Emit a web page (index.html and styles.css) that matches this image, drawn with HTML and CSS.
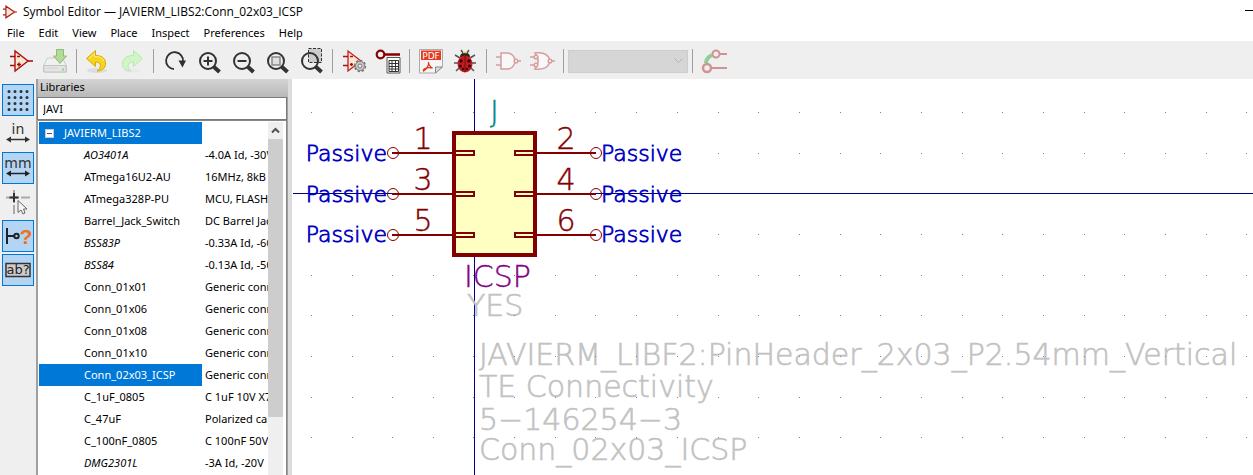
FILE: index.html
```html
<!DOCTYPE html>
<html lang="en">
<head>
<meta charset="utf-8">
<title>Symbol Editor</title>
<link rel="stylesheet" href="styles.css">
</head>
<body>
<header class="titlebar">
  <svg class="app-icon" width="14" height="14" viewBox="0 0 24 24"><path d="M5 2v20L20 12zM0 7h5M0 17h5M20 12h4" fill="#f9e8d4" stroke="#b01818" stroke-width="2"/></svg>
  <h1 class="title">Symbol Editor — JAVIERM_LIBS2:Conn_02x03_ICSP</h1>
  <button class="minimize" aria-label="Minimize"></button>
</header>
<nav class="menubar">
  <button>File</button><button>Edit</button><button>View</button><button>Place</button><button>Inspect</button><button>Preferences</button><button>Help</button>
</nav>
<div class="toolbar">
  <button aria-label="New symbol"><svg viewBox="0 0 24 24"><path d="M6 2v20L19 12z" fill="#fae6cf" stroke="#b01010" stroke-width="1.4"/><path d="M1 7.500h5M1 16.500h5M19 12h5M8 7.500h3M8 15.500h4M10 13.500v4" fill="none" stroke="#a80808" stroke-width="1.500"/></svg></button>
  <button aria-label="Save"><svg viewBox="0 0 24 24"><path d="M4.500 9h15l4 8v6H.5v-6z" fill="#f1f1f1" stroke="#ccc"/><path d="M1 16.500h22V23H1z" fill="#e4e4e4" stroke="#c4c4c4"/><path d="M3 19h12" stroke="#d2d2d2"/><path d="M19 20.500h2" stroke="#7fe07f" stroke-width="2"/><path d="M13.500.5h7V7h3L17 14.500 10.500 7h3z" fill="#b3da96" stroke="#8fbb7d"/></svg></button>
  <i class="sep"></i>
  <button aria-label="Undo"><svg viewBox="0 0 24 24"><ellipse cx="11" cy="21.500" rx="10" ry="2.500" fill="#ddd"/><path d="M.5 9.500 9.500 1.500v5c7 0 10.500 3.500 10 9-.4 4-4 6.500-8.500 6.500 4-2.500 5.500-9-1.500-9v4.500z" fill="#f5d51e" stroke="#d9a900"/><path d="M3 9.500 8.500 4.500v3c5 0 8 1.500 9.500 4.500" fill="none" stroke="#fdf087"/></svg></button>
  <button aria-label="Redo"><svg viewBox="0 0 24 24"><ellipse cx="12" cy="21.500" rx="9" ry="2" fill="#e9e9e9"/><path d="M22.500 9.500 13.500 1.500v5c-7 0-11.500 3.500-11 9 .4 4 4 6.500 8.500 6.500-4-2.500-4.500-9 2.500-9v4.500z" fill="#d2f5c5" stroke="#b5e9aa"/></svg></button>
  <i class="sep"></i>
  <button aria-label="Refresh"><svg viewBox="0 0 24 24"><path d="M11 20.200a8.500 8.500 0 1 1 9-7.500" fill="none" stroke="#303030" stroke-width="1.800"/><path d="M15.500 11.500h7.500L19.500 18.500z" fill="#303030"/></svg></button>
  <button aria-label="Zoom in"><svg viewBox="0 0 24 24"><circle cx="11" cy="12" r="8" class="lens"/><path d="m16.500 17.500 6 5.500" class="grip"/><path d="M6.500 12h9M11 7.500v9" class="mark"/></svg></button>
  <button aria-label="Zoom out"><svg viewBox="0 0 24 24"><circle cx="11" cy="12" r="8" class="lens"/><path d="m16.500 17.500 6 5.500" class="grip"/><path d="M6.500 12h9" class="mark"/></svg></button>
  <button aria-label="Zoom to fit"><svg viewBox="0 0 24 24"><path d="M7 8h8v8H7z" fill="#e0e0e0" stroke="#888" stroke-width="1.500"/><circle cx="11" cy="12" r="8" class="lens"/><path d="m16.500 17.500 6 5.500" class="grip"/></svg></button>
  <button aria-label="Zoom to selection"><svg viewBox="0 0 24 24"><path d="M9.500-.5h13v14h-13z" fill="#ccc" stroke="#333" stroke-dasharray="3 1.500"/><circle cx="11" cy="12" r="8" class="lens"/><path d="m16.500 17.500 6 5.500" class="grip"/></svg></button>
  <i class="sep"></i>
  <button aria-label="Symbol properties"><svg viewBox="0 0 24 24"><path d="M6 2v20L19 12z" fill="#fae6cf" stroke="#c02020" stroke-width="1.300"/><path d="M1 7.500h5M1 16.500h5M8 7.500h3M8 15.500h3M9.500 14v3" stroke="#b01010" stroke-width="1.500"/><circle cx="18" cy="17" r="5.200" fill="#bbb" stroke="#777" stroke-width="2" stroke-dasharray="2.300 1.700"/><circle cx="18" cy="17" r="4.500" fill="#ccc" stroke="#888"/><circle cx="18" cy="17" r="2" fill="#eee" stroke="#777"/></svg></button>
  <button aria-label="Pin table"><svg viewBox="0 0 24 24"><circle cx="4.500" cy="5.500" r="3.800" fill="none" stroke="#870000" stroke-width="2.200"/><path d="M8 5.500h16" stroke="#870000" stroke-width="2.500"/><path d="M11 8.500h13V24H11z" fill="#fff" stroke="#555"/><path d="M13 11.500h9.500v11H13zM13 14.500h9M13 17.500h9M13 20h9M16 11.500v11M19.500 11.500v11" fill="none" stroke="#333"/></svg></button>
  <i class="sep"></i>
  <button aria-label="Datasheet"><svg viewBox="0 0 24 24"><path d="M.5.5h23V17l-7 7H.5z" fill="#f5f5f5" stroke="#aaa"/><path d="M2 1.500h20v9.500H2z" fill="#e63a20"/><text x="12" y="9.500" class="pdf">PDF</text><path d="M9.500 13c1 3-2 7-5 9-1-2 4-4 9-3-2-1-4-3-4-6z" fill="none" stroke="#e0371c" stroke-width="1.300"/><path d="M16.500 24v-6h7z" fill="#ddd" stroke="#888"/></svg></button>
  <button aria-label="Check symbol"><svg viewBox="0 0 24 24"><path d="M8 1l2 3M16 1l-2 3M2 6l5 3M22 6l-5 3M1 14h5M23 14h-5M3 22l4-4M21 22l-4-4" stroke="#555" stroke-width="1.500"/><path d="M7 8c0-6 10-6 10 0z" fill="#262626"/><path d="M10 3.500h4" stroke="#e7cf3c" stroke-width="1.500"/><ellipse cx="12" cy="15" rx="7.500" ry="8.500" fill="#c91920"/><path d="M12 7v16" stroke="#611" stroke-width="1"/><g fill="#230a0a"><circle cx="8" cy="12" r="1.700"/><circle cx="16" cy="12" r="1.700"/><circle cx="7.500" cy="17" r="1.500"/><circle cx="16.500" cy="17" r="1.500"/><circle cx="10" cy="20" r="1.200"/><circle cx="14" cy="20" r="1.200"/></g></svg></button>
  <i class="sep"></i>
  <button aria-label="Normal style"><svg viewBox="0 0 24 24" class="faded"><path d="M5 4h6a8 8 0 0 1 0 16H5z"/><circle cx="20" cy="12" r="1.800"/><path d="M0 8h5M0 16h5M22 12h3"/></svg></button>
  <button aria-label="De Morgan style"><svg viewBox="0 0 24 24" class="faded"><path d="M5 4c10-1 14 2 15 8-1 6-5 9-15 8 4-5 4-11 0-16z"/><circle cx="6" cy="8" r="1.800"/><circle cx="6" cy="16" r="1.800"/><path d="M0 8h4M0 16h4"/><circle cx="20" cy="12" r="1.800"/><path d="M22 12h3"/></svg></button>
  <i class="sep"></i>
  <select class="unit" aria-label="Unit" disabled><option></option></select>
  <i class="sep"></i>
  <button aria-label="Synchronized pins"><svg viewBox="0 0 24 24"><path d="M4 14c0-4 2-6 6-8" fill="none" stroke="#8fce95" stroke-width="4"/><path d="M17 5h8M9 19h16" stroke="#cf9393" stroke-width="2"/><circle cx="14" cy="5" r="3.500" fill="#efefef" stroke="#cf9393" stroke-width="2"/><circle cx="5" cy="19" r="4" fill="#efefef" stroke="#cf9393" stroke-width="2.500"/></svg></button>
</div>
<main class="workspace">
  <aside class="options">
    <button class="on" aria-label="Grid"><svg viewBox="0 0 24 24"><path d="M3 3.500h20M3 9.500h20M3 15.500h20M3 21.500h20" stroke="#26323d" stroke-width="3" stroke-linecap="round" stroke-dasharray="0 6"/></svg></button>
    <button aria-label="Inches"><svg viewBox="0 0 24 24"><text x="12" y="12" class="unit-label">in</text><path d="M2 17.500h20" stroke="#333" stroke-width="1.500"/><path d="m0 17.500 5-3v6zM24 17.500l-5-3v6z" fill="#333"/></svg></button>
    <button class="on" aria-label="Millimeters"><svg viewBox="0 0 24 24"><text x="12" y="12" class="unit-label">mm</text><path d="M2 17.500h20" stroke="#222" stroke-width="1.500"/><path d="m0 17.500 5-3v6zM24 17.500l-5-3v6z" fill="#222"/></svg></button>
    <button aria-label="Cursor shape"><svg viewBox="0 0 24 24"><path d="M0 7.500h24M8 0v24" stroke="#aaa" stroke-width="2" stroke-dasharray="13 2"/><path d="M3.500 7.500h9M8 3v9" stroke="#333" stroke-width="2"/><path d="M12 10.500v12l3-2.500 2 4 2-1-1.500-4h3.500z" fill="#f5f5f5" stroke="#666"/></svg></button>
    <button class="on" aria-label="Pin electrical types"><svg viewBox="0 0 24 24"><path d="M1 4v16M1 12h7" stroke="#222" stroke-width="2"/><circle cx="10.500" cy="12" r="2.200" fill="none" stroke="#222" stroke-width="2"/><text x="20" y="20" class="query">?</text></svg></button>
    <button class="on" aria-label="Show hidden fields"><svg viewBox="0 0 24 24"><path d="M0 5.500h24v13H0z" fill="#ccc" stroke="#333" stroke-width="1.500"/><text x="12" y="16" class="field-label">ab?</text></svg></button>
  </aside>
  <section class="libraries">
    <label class="pane-title" for="filter">Libraries</label>
    <input class="filter" id="filter" value="JAVI">
    <div class="tree">
      <table class="symbols">
        <colgroup><col class="name-col"><col></colgroup>
        <tr class="library"><td><button class="collapse" aria-label="Collapse"></button>JAVIERM_LIBS2</td><td></td></tr>
        <tr class="derived"><td>AO3401A</td><td>-4.0A Id, -30V</td></tr>
        <tr><td>ATmega16U2-AU</td><td>16MHz, 8kB</td></tr>
        <tr><td>ATmega328P-PU</td><td>MCU, FLASH</td></tr>
        <tr><td>Barrel_Jack_Switch</td><td>DC Barrel Jack</td></tr>
        <tr class="derived"><td>BSS83P</td><td>-0.33A Id, -60V</td></tr>
        <tr class="derived"><td>BSS84</td><td>-0.13A Id, -50V</td></tr>
        <tr><td>Conn_01x01</td><td>Generic connector</td></tr>
        <tr><td>Conn_01x06</td><td>Generic connector</td></tr>
        <tr><td>Conn_01x08</td><td>Generic connector</td></tr>
        <tr><td>Conn_01x10</td><td>Generic connector</td></tr>
        <tr class="current"><td>Conn_02x03_ICSP</td><td>Generic connector</td></tr>
        <tr><td>C_1uF_0805</td><td>C 1uF 10V X7R</td></tr>
        <tr><td>C_47uF</td><td>Polarized cap</td></tr>
        <tr><td>C_100nF_0805</td><td>C 100nF 50V</td></tr>
        <tr class="derived"><td>DMG2301L</td><td>-3A Id, -20V</td></tr>
      </table>
      <div class="scrollbar"><button class="scroll-up" aria-label="Scroll up"><svg width="9" height="7" viewBox="0 0 9 7"><path d="m1 5.500 3.500-3.500L8 5.500" fill="none" stroke="#505050" stroke-width="2"/></svg></button><div class="thumb"></div></div>
    </div>
  </section>
  <section class="canvas">
    <svg class="drawing" role="img" aria-label="Conn_02x03_ICSP symbol">
      <defs>
        <path id="dots" stroke="#848484" d="M-163 0h1m40 0h1m39 0h1m40 0h1m39 0h1m40 0h1m40 0h1m39 0h1m40 0h1m40 0h1m40 0h1m39 0h1m40 0h1m40 0h1m39 0h1m40 0h1m40 0h1m39 0h1m40 0h1m40 0h1m39 0h1m40 0h1m40 0h1m39 0h1"/>
        <g id="pin-l"><path d="M-82 0h61" stroke-width="2"/><circle cx="-81" cy="0" r="5.500"/><path d="M-20-2H0v4h-20z" stroke-width="2"/></g>
        <g id="pin-r"><path d="M61 0h61" stroke-width="2"/><circle cx="122" cy="0" r="5.500"/><path d="M41-2h20v4H41z" stroke-width="2"/></g>
      </defs>
      <g transform="translate(182 114)">
        <path d="M-181 .5h4000M.5-114v4000" stroke="#000084"/>
        <g class="hidden-field">
          <text x="-7" y="123">YES</text>
          <text x="5" y="172">JAVIERM_LIBF2:PinHeader_2x03_P2.54mm_Vertical</text>
          <text x="5" y="204">TE Connectivity</text>
          <text x="5" y="237">5−146254−3</text>
          <text x="5" y="267">Conn_02x03_ICSP</text>
        </g>
        <g transform="translate(0 .5)"><use href="#dots" y="-81"/><use href="#dots" y="-40"/><use href="#dots" y="41"/><use href="#dots" y="82"/><use href="#dots" y="122"/><use href="#dots" y="163"/><use href="#dots" y="204"/><use href="#dots" y="244"/></g>
        <path d="M-20-60h81v122h-81z" fill="#ffffc2" stroke="#840000" stroke-width="4"/>
        <g fill="none" stroke="#840000">
          <use href="#pin-l" y="-40"/><use href="#pin-l" y="1"/><use href="#pin-l" y="42"/>
          <use href="#pin-r" y="-40"/><use href="#pin-r" y="1"/><use href="#pin-r" y="42"/>
        </g>
        <g class="pin-number">
          <text x="-51" y="-44">1</text><text x="-51" y="-3">3</text><text x="-51" y="38">5</text>
          <text x="92" y="-44">2</text><text x="92" y="-3">4</text><text x="92" y="38">6</text>
        </g>
        <g class="pin-type end">
          <text x="-87" y="-32">Passive</text><text x="-87" y="9">Passive</text><text x="-87" y="49">Passive</text>
        </g>
        <g class="pin-type">
          <text x="127" y="-32">Passive</text><text x="127" y="9">Passive</text><text x="127" y="49">Passive</text>
        </g>
        <text x="16" y="-71" class="reference">J</text>
        <text x="-10" y="94" class="value">ICSP</text>
      </g>
    </svg>
  </section>
</main>
</body>
</html>
```
FILE: styles.css
```css
* { box-sizing: border-box; }
body {
  margin: 0;
  height: 100vh;
  display: flex;
  flex-direction: column;
  overflow: hidden;
  background: #fff;
  color: #000;
  font: 11px/16px "Noto Sans", "Open Sans", sans-serif;
}
button { padding: 0; border: 0; background: none; font: inherit; color: inherit; }
svg { display: block; overflow: visible; }

.titlebar { display: flex; align-items: center; height: 23px; padding-left: 3px; gap: 6px; }
.title { margin: 0; font: 12px/16px "Open Sans", "Noto Sans", sans-serif; }
.minimize { width: 8px; height: 1px; margin: 0 0 2px auto; background: #000; }
.menubar { display: flex; height: 18px; padding-left: 7px; gap: 14px; }
.menubar button { height: 20px; }

.toolbar { display: flex; align-items: center; height: 38px; padding: 2px 4px 0; background: #efefef; }
.toolbar button { width: 34px; height: 34px; display: grid; place-items: center; }
.toolbar button svg, .options button svg { width: 24px; height: 24px; }
.sep { width: 1px; height: 24px; margin: 0 4px; background: #a0a0a0; }
.lens { fill: none; stroke: #333; stroke-width: 2; }
.grip { stroke: #333; stroke-width: 4; }
.mark { stroke: #333; stroke-width: 2; }
.pdf { font: 9px "DejaVu Sans", sans-serif; fill: #fff; text-anchor: middle; }
.faded path, .faded circle { fill: #f8f8f8; stroke: #d69d9d; stroke-width: 1.5; }
.unit {
  width: 120px;
  height: 23px;
  border: 1px solid #bfbfbf;
  border-radius: 0;
  appearance: none;
  background: #ccc url("data:image/svg+xml,%3Csvg xmlns='http://www.w3.org/2000/svg' width='9' height='6'%3E%3Cpath d='M.5.5l4 4 4-4' fill='none' stroke='%23999'/%3E%3C/svg%3E") no-repeat right 4px center;
}

.workspace { flex: 1; min-height: 0; display: flex; }
.options { width: 36px; display: flex; flex-direction: column; align-items: center; gap: 2px; padding-top: 5px; background: #efefef; }
.options button { width: 32px; height: 32px; display: grid; place-items: center; border: 1px solid transparent; }
.options .on { border-color: #0078d7; background: #b3d5f3; }
.unit-label { font: 14px "DejaVu Sans", sans-serif; fill: #333; text-anchor: middle; }
.query { font: bold 21px "Liberation Sans", sans-serif; fill: #f07020; text-anchor: middle; }
.field-label { font: 13px "DejaVu Sans", sans-serif; fill: #222; text-anchor: middle; }

.libraries { width: 256px; display: flex; flex-direction: column; border-left: 2px solid #a0a0a0; border-right: 4px solid #dcdcdc; background: #a0a0a0; }
.pane-title { height: 18px; padding-left: 2px; background: linear-gradient(#d4d4d4, #b8b8b8); }
.filter { height: 23px; margin: 0 1px 0 -1px; padding: 0 5px; border: 1px solid #7a7a7a; font: inherit; background: #fff; }
.tree { flex: 1; min-height: 0; display: flex; margin-right: 1px; padding: 1px 1px 0 1px; border-top: 1px solid #828790; border-right: 1px solid #828790; background: #fff; overflow: hidden; }
.symbols { flex: 1; min-width: 0; width: 100%; table-layout: fixed; border-collapse: collapse; align-self: flex-start; }
.name-col { width: 163px; }
.symbols td { height: 22px; padding: 0 0 0 45px; white-space: nowrap; overflow: hidden; text-overflow: clip; }
.symbols td + td { padding-left: 3px; }
.symbols .library td:first-child, .symbols .current td:first-child { background: #0078d7; color: #fff; }
.symbols .library td:first-child { padding-left: 6px; }
.derived td:first-child { font-style: italic; }
.collapse { width: 9px; height: 9px; margin-right: 10px; border: 1px solid #ccc; background: linear-gradient(#335a9c, #335a9c) center / 5px 1px no-repeat #fff; }
.scrollbar { width: 17px; flex: none; border-right: 2px solid #fff; background: #efefef; }
.scroll-up { width: 100%; height: 17px; display: grid; place-items: center; }
.thumb { height: 278px; background: #cdcdcd; }

.canvas { flex: 1; min-width: 0; }
.drawing { width: 100%; height: 100%; overflow: hidden; font: 200 30px "DejaVu Sans", sans-serif; }
.hidden-field { fill: #c2c2c2; stroke: #c2c2c2; stroke-width: 0.6px; }
.pin-number { fill: #840000; stroke: #840000; stroke-width: 0.4px; text-anchor: middle; }
.pin-type { font-size: 22px; fill: #0000c2; stroke: #0000c2; stroke-width: 0.8px; }
.end { text-anchor: end; }
.reference { fill: #008484; stroke: #008484; stroke-width: 0.4px; }
.value { fill: #840084; stroke: #840084; stroke-width: 0.4px; }
```
